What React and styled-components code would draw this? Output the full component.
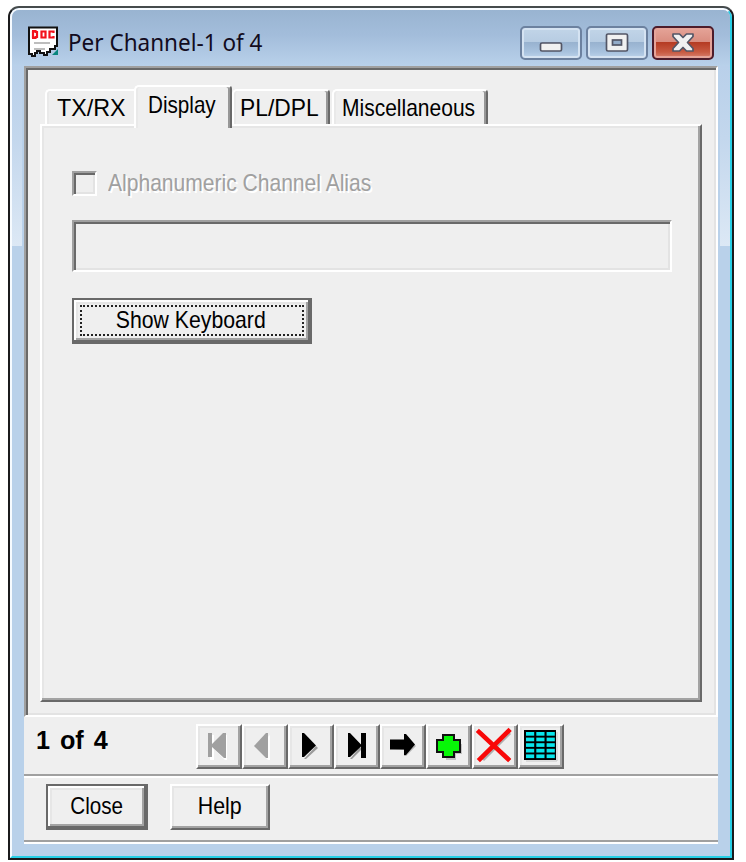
import React from "react";
import styled, { createGlobalStyle, css } from "styled-components";

const GlobalStyle = createGlobalStyle`
  * { box-sizing: border-box; }
  body { margin: 0; background: #fff; }
`;

const raised = css`
  border: 2px solid;
  border-color: #fff #696969 #696969 #fff;
  box-shadow: inset -2px -2px 0 #a3a3a3, inset 2px 2px 0 #e6e6e6;
`;

const sunken = css`
  border: 2px solid;
  border-color: #a0a0a0 #fff #fff #a0a0a0;
  box-shadow: inset 2px 2px 0 #696969, inset -2px -2px 0 #e3e3e3;
`;

const Desktop = styled.main`
  width: 746px;
  height: 862px;
  padding: 6px 0 0 8px;
  background: #fff;
  overflow: hidden;
  font-family: "Liberation Sans", Arial, sans-serif;
  font-size: 24px;
  line-height: 28px;
  color: #000;
`;

const WindowFrame = styled.section`
  width: 726px;
  height: 854px;
  border: 2px solid #1b1b1d;
  border-top-color: #454b4c;
  border-radius: 11px 11px 0 0;
  background: #b9d1ea;
  overflow: hidden;
`;

const WindowGlow = styled.div`
  height: 850px;
  border: 2px solid;
  border-color: #f7fbff #27cfe6 #27cfe6 #f7fbff;
  border-radius: 9px 9px 0 0;
  overflow: hidden;
`;

const TitleBar = styled.header`
  height: 56px;
  display: flex;
  align-items: flex-start;
  padding: 16px 16px 0 15px;
  background: linear-gradient(#99b4d1, #a3bddb 45%, #b9d1ea);
`;

const Title = styled.h1`
  flex: 1;
  margin: 0 0 0 9px;
  font: 400 23.5px/32px "Noto Sans", sans-serif;
  color: #120b20;
  white-space: nowrap;
`;

const Scaled = styled.span`
  display: inline-block;
  white-space: nowrap;
  transform: scaleX(${(p) => p.$scale});
  transform-origin: ${(p) => (p.$center ? "center" : "left")};
`;

const Caption = styled.div`
  display: flex;
  gap: 4px;
`;

const CaptionButton = styled.button`
  width: 62px;
  height: 34px;
  display: grid;
  place-items: center;
  padding: 0;
  border: 2px solid ${(p) => (p.$close ? "#4d1c2b" : "#6c819f")};
  border-radius: 5px;
  box-shadow: inset 0 0 0 2px ${(p) => (p.$close ? "#e5a49a" : "#d5e3f2")};
  background: ${(p) =>
    p.$close
      ? "linear-gradient(#e5a498, #d98d80 46%, #b53b23 48%, #c85a42 80%, #d98170)"
      : "linear-gradient(#c2d5e8, #b7cce2 46%, #98b2cf 48%, #a8c2de 80%, #bdd3ea)"};
`;

const Body = styled.div`
  height: 778px;
  display: flex;
`;

const Side = styled.div`
  width: 12px;
  height: 180px;
  background: linear-gradient(#b9d0ea, #c3d7ed 40%, #dce8f5) no-repeat
    ${(p) => (p.$right ? "right" : "left")} / 10px 100%;
`;

const Client = styled.div`
  width: 694px;
  height: 778px;
  display: flex;
  flex-direction: column;
  background: #efefef;
`;

const FormPanel = styled.div`
  height: 651px;
  padding: 17px 14px 0;
  ${sunken}
`;

const TabStrip = styled.nav`
  height: 39px;
  display: flex;
  align-items: flex-end;
  padding-left: 5px;
`;

const Tab = styled.button`
  width: ${(p) => p.$width}px;
  height: ${(p) => (p.$active ? 43 : 35)}px;
  margin: ${(p) => (p.$active ? "0 0 -4px" : "0")};
  margin-right: ${(p) => p.$gap || 0}px;
  position: relative;
  z-index: ${(p) => (p.$active ? 1 : 0)};
  padding: ${(p) => (p.$active ? "4px" : "3px")} 0 0 ${(p) => p.$inset}px;
  border: solid;
  border-width: 2px ${(p) => (p.$covered ? 0 : 2)}px 0 2px;
  border-color: #fff #696969 #fff #fff;
  border-radius: 5px ${(p) => (p.$covered ? 0 : 4)}px 0 0;
  box-shadow: ${(p) =>
    p.$covered ? "inset 2px 0 0 #e9e9e9" : "inset -2px 0 0 #979797, inset 2px 0 0 #e9e9e9"};
  background: #efefef;
  display: flex;
  align-items: flex-start;
  font: inherit;
  color: #000;
`;

const TabPage = styled.div`
  width: 662px;
  height: 578px;
  padding: 44px 30px 0;
  display: flex;
  flex-direction: column;
  align-items: flex-start;
  ${raised}
`;

const CheckRow = styled.label`
  height: 26px;
  display: flex;
  align-items: center;
  gap: 11px;
  color: #a0a0a0;
  text-shadow: 2px 2px 0 #fff;
`;

const CheckBox = styled.span`
  width: 25px;
  height: 25px;
  ${sunken}
`;

const AliasInput = styled.input`
  width: 600px;
  height: 52px;
  margin-top: 24px;
  padding: 0 8px;
  background: #efefef;
  ${sunken}
`;

const PushButton = styled.button`
  width: ${(p) => p.$width}px;
  height: 46px;
  padding: 0 0 2px;
  background: #efefef;
  font: inherit;
  color: #000;
  display: flex;
  align-items: center;
  justify-content: center;
  ${raised}
  ${(p) =>
    p.$primary &&
    css`
      border: 2px solid #696969;
      box-shadow: inset -2px -2px 0 #696969, inset 2px 2px 0 #fff,
        inset -4px -4px 0 #a3a3a3, inset 4px 4px 0 #e6e6e6;
    `}
`;

const KeyboardButton = styled(PushButton)`
  margin-top: 26px;
  padding: 6px;
`;

const FocusRing = styled.span`
  width: 226px;
  height: 31px;
  margin-bottom: 1px;
  padding: 0 2px 2px 0;
  border: 2px dotted #222;
  display: flex;
  align-items: center;
  justify-content: center;
`;

const NavBar = styled.div`
  height: 57px;
  display: flex;
  padding: 7px 0 0 12px;
`;

const Position = styled.strong`
  width: 160px;
  padding-top: 2px;
  font-size: 26px;
  word-spacing: 3px;
`;

const ToolButton = styled.button`
  width: 46px;
  height: 45px;
  padding: 0;
  background: #efefef;
  ${raised}
  svg { display: block; }
`;

const Footer = styled.div`
  height: 68px;
  display: flex;
  gap: 22px;
  padding: 8px 0 0 22px;
  border-top: 2px solid #a0a0a0;
  border-bottom: 2px solid #a0a0a0;
  box-shadow: inset 0 2px 0 #fff, 0 2px 0 #fff;
`;

function DocIcon() {
  return (
    <svg width="32" height="32" viewBox="0 0 32 32">
      <path d="M25 29l6-6v6z" fill="#07857d" />
      <path
        d="M2 1.500h28v18.500h-2v3h-5v3h-3v3h-3v-2h-4v-2h-3v2H8v3H5v-2H2z"
        fill="#fff"
        stroke="#111"
        strokeWidth="2"
      />
      <path
        d="M6 5v7M5 5h3.500v1H10v5H8.500v1H5M14.500 5.500h4v6h-4zM26.500 7V5.500h-4v6h4V10"
        fill="none"
        stroke="#f3121c"
        strokeWidth="2.200"
      />
      <path d="M7 17h16M7 23h11" stroke="#bdbdbd" strokeWidth="2" />
    </svg>
  );
}

function CaptionGlyph({ kind }) {
  return (
    <svg width="26" height="22" viewBox="0 0 26 22" stroke="#535666" fill="#f1f1f1">
      {kind === "min" && <rect x="2.5" y="11" width="21" height="8" rx="1.5" strokeWidth="1.7" />}
      {kind === "max" && (
        <>
          <rect x="2.5" y="2" width="21" height="17" rx="1.5" strokeWidth="1.7" />
          <rect x="8.500" y="8" width="9" height="5" fill="#93acc9" strokeWidth="1.7" />
        </>
      )}
      {kind === "close" && (
        <path
          d="M3 2h6.500L13 5.500 16.500 2H23v2.500L17.500 10.500 23 16.500V19h-6.500L13 15.500 9.500 19H3v-2.500l5.500-6L3 4.500z"
          strokeWidth="1.7"
          strokeLinejoin="round"
        />
      )}
    </svg>
  );
}

const glyphs = {
  first: (
    <>
      <path d="M14 11h4v11l10-11h3v25h-2L18 25v11h-4z" fill="#fff" />
      <path d="M12 9h4v11L27 9h3v25h-2L16 23v10h-4z" fill="#a0a0a0" />
    </>
  ),
  prev: (
    <>
      <path d="M28 11v25h-2L14 24" fill="#fff" />
      <path d="M24 9h2v25h-2L12 22z" fill="#a0a0a0" />
    </>
  ),
  next: (
    <>
      <path d="M16 35h2l12-11-2-2z" fill="#9b9b9b" />
      <path d="M14 9h2l12 12.500L16 33h-2z" fill="#000" />
    </>
  ),
  last: (
    <>
      <path d="M16 35h2l10-10-2-2z" fill="#9b9b9b" />
      <path d="M14 9h2l11 11.500V9h5v25h-5V22.500L16 33h-2z" fill="#000" />
    </>
  ),
  go: (
    <>
      <path d="M12 26h12v6h2l10-10-2-2-10 5z" fill="#b5b5b5" />
      <path d="M10 15.500h14V10h2l9 10.500L26 31h-2v-5.500H10z" fill="#000" />
    </>
  ),
  add: (
    <>
      <path d="M20 35h9v-6h6v-9" fill="none" stroke="#c2c2c2" strokeWidth="2" />
      <path
        d="M17 11h11v5h6v12h-6v5H17v-5h-6V16h6z"
        fill="#07f707"
        stroke="#111"
        strokeWidth="2"
      />
    </>
  ),
  remove: (
    <>
      <path d="M9 9l29 27M38 9L11 36" fill="none" stroke="#b0b0b0" strokeWidth="3" />
      <path d="M7 8l29 27M36.500 7L8 35" fill="none" stroke="#f90808" strokeWidth="4.600" strokeLinecap="square" />
    </>
  ),
  table: (
    <>
      <path d="M8 37h31V8" fill="none" stroke="#c8c8c8" strokeWidth="1" />
      <rect x="6" y="6" width="32" height="30" fill="#000" />
      {[0, 1, 2, 3, 4].map((row) =>
        [0, 1, 2].map((col) => (
          <rect
            key={`${row}${col}`}
            x={8 + col * 10.300}
            y={8 + row * 5.600}
            width="8.200"
            height="3.700"
            fill="#08e6ec"
          />
        ))
      )}
    </>
  ),
};

const tools = [
  ["first", "First record"],
  ["prev", "Previous record"],
  ["next", "Next record"],
  ["last", "Last record"],
  ["go", "Go to record"],
  ["add", "Add record"],
  ["remove", "Delete record"],
  ["table", "Table view"],
];

export default function App() {
  return (
    <Desktop>
      <GlobalStyle />
      <WindowFrame>
        <WindowGlow>
          <TitleBar>
            <DocIcon />
            <Title>
              <Scaled $scale={0.957}>Per Channel-1 of 4</Scaled>
            </Title>
            <Caption>
              <CaptionButton aria-label="Minimize"><CaptionGlyph kind="min" /></CaptionButton>
              <CaptionButton aria-label="Maximize"><CaptionGlyph kind="max" /></CaptionButton>
              <CaptionButton $close aria-label="Close window"><CaptionGlyph kind="close" /></CaptionButton>
            </Caption>
          </TitleBar>
          <Body>
            <Side />
            <Client>
              <FormPanel>
                <TabStrip>
                  <Tab $width={89} $inset={10} $covered><Scaled $scale={0.97}>TX/RX</Scaled></Tab>
                  <Tab $width={98} $inset={12} $active><Scaled $scale={0.86}>Display</Scaled></Tab>
                  <Tab $width={98} $inset={6} $gap={2}><Scaled $scale={0.95}>PL/DPL</Scaled></Tab>
                  <Tab $width={156} $inset={8}><Scaled $scale={0.875}>Miscellaneous</Scaled></Tab>
                </TabStrip>
                <TabPage>
                  <CheckRow>
                    <CheckBox />
                    <Scaled $scale={0.877}>Alphanumeric Channel Alias</Scaled>
                  </CheckRow>
                  <AliasInput disabled aria-label="Channel alias" />
                  <KeyboardButton $width={240} $primary>
                    <FocusRing><Scaled $scale={0.885} $center>Show Keyboard</Scaled></FocusRing>
                  </KeyboardButton>
                </TabPage>
              </FormPanel>
              <NavBar>
                <Position><Scaled $scale={0.97}>1 of 4</Scaled></Position>
                {tools.map(([id, label]) => (
                  <ToolButton key={id} aria-label={label}>
                    <svg width="42" height="41" viewBox="2 2 42 41">{glyphs[id]}</svg>
                  </ToolButton>
                ))}
              </NavBar>
              <Footer>
                <PushButton $width={102} $primary><Scaled $scale={0.86} $center>Close</Scaled></PushButton>
                <PushButton $width={100}><Scaled $scale={0.89} $center>Help</Scaled></PushButton>
              </Footer>
            </Client>
            <Side $right />
          </Body>
        </WindowGlow>
      </WindowFrame>
    </Desktop>
  );
}
